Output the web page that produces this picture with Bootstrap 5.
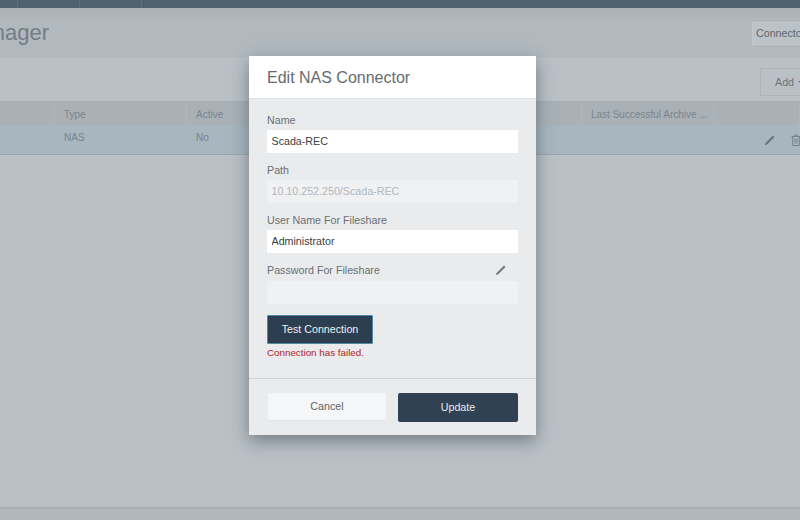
<!doctype html>
<html lang="en"><head><meta charset="utf-8"><title>Connector Manager</title>
<link href="https://cdn.jsdelivr.net/npm/bootstrap@5.3.0/dist/css/bootstrap.min.css" rel="stylesheet">
<style>
html,body{height:100%}
body{width:800px;height:520px;overflow:hidden;position:relative;font-family:"Liberation Sans",Arial,sans-serif;font-size:12px;background:#b9c0c6;color:#69737b}
.top-strip{height:8px;background:#51616f}
.top-strip span{width:62px;border-right:1px solid #5f6e7b;flex:none}
.top-strip span:first-child{width:18px}
.head-zone{height:50px;background:linear-gradient(#a9b1b7,#b1b9bf 30%);border-bottom:1px solid #b4bcc2}
.page-title{width:49px;font-size:22px;line-height:26px;color:#747c84;white-space:nowrap;overflow:hidden;direction:rtl;margin-top:12px}
.conn-select{margin-top:14px;width:48px;height:23px;background:#bcc3c8;border:1px solid #c3c9ce;border-right:0;font-size:10.7px;line-height:21px;padding-left:3px;color:#5d666e;white-space:nowrap;overflow:hidden}
.tool-zone{height:43px;background:#b9c0c6}
.add-btn{margin-top:10px;width:40px;height:28px;background:#b9c0c6;border:1px solid #adb5bb;border-right:0;font-size:10.7px;line-height:26px;padding-left:14px;color:#6b747c;white-space:nowrap;overflow:hidden}
.add-caret{display:inline-block;border:3px solid transparent;border-top-color:#6b747c;border-bottom:0;margin-left:4px;vertical-align:2px}
.grid-wrap{display:grid;grid-template-columns:55px 132px 395px 132px 86px}
.grid-wrap>div{padding-left:9px;font-size:10px;white-space:nowrap;overflow:hidden}
.grid-head{height:24px;background:#a9b1b7;border-top:1px solid #a5adb3}
.grid-head>div{line-height:25px;color:#7b848b;border-right:1px solid #aeb6bc}
.grid-body{height:30px;background:#a7b6bf;border-bottom:1px solid #9aa5ad}
.grid-body>div{line-height:26px;color:#75838c}
.grid-wrap>.row-icons{padding:9px 0 0 50px;gap:15px}
.fill-zone{height:352px}
.foot-zone{height:14px;background:#b0b8be;border-top:2px solid #a6aeb4}
.dlg{position:absolute;left:249px;top:56px;width:287px;height:379px;background:#e9ebed;box-shadow:0 6px 16px rgba(50,60,70,.5)}
.dlg-head{height:43px;background:#fff;border-bottom:1px solid #dfe2e4;padding:13px 18px 0;font-size:16px;line-height:18px;color:#666b70}
.dlg-body{height:280px;padding:14px 18px 0;border-bottom:1px solid #d2d5d8}
.fld-label{height:17px;line-height:14px;font-size:10.7px;color:#6a6f74}
.fld-label.pw-label{height:18px}
.fld-input{display:block;width:251px;height:23px;border:0;border-radius:0;background:#fff;padding:0 4.5px 2px;font-size:10.7px;color:#3c4043;margin-bottom:10px}
.fld-input:disabled{background:#f0f1f3;color:#b3b6b9}
.fld-input:focus{outline:0;box-shadow:none;background:#fff}
.test-btn{width:106px;height:29px;margin-top:1px;background:#2d3e50;border:1px solid #4c8aa8;border-radius:1px;color:#eef1f3;font-size:10.7px;padding:0}
.fail-msg{font-size:9.8px;line-height:12px;margin-top:3px;color:#b5222c}
.dlg-foot{padding:14px 18px 0;gap:12px}
.cancel-btn,.update-btn{height:28px;border-radius:2px;font-size:10.7px;padding:0}
.cancel-btn{width:118px;margin-left:1px;background:#f4f6f7;border:0;border-bottom:1px solid #e1e3e5;color:#5f6468}
.update-btn{width:120px;height:29px;background:#2f4153;border:0;color:#e8ecef}
.pen-sm{display:block;flex:none}
.pen-label{margin:1px 11px 0 0;flex:none}
</style></head>
<body>
<div class="top-strip d-flex"><span></span><span></span><span></span></div>
<div class="head-zone d-flex justify-content-between">
  <div class="page-title">Connector Manager</div>
  <div class="conn-select">Connectors</div>
</div>
<div class="tool-zone d-flex justify-content-end"><div class="add-btn">Add<span class="add-caret"></span></div></div>
<div class="grid-wrap grid-head"><div></div><div>Type</div><div>Active</div><div>Last Successful Archive ...</div><div></div></div>
<div class="grid-wrap grid-body"><div></div><div>NAS</div><div>No</div><div></div>
  <div class="row-icons d-flex">
    <svg class="pen-sm" width="12" height="12" viewBox="0 0 12 12"><path d="M1 11l.5-2L9 1.500l1.500 1.500L3 10.500z" fill="#66737c"/></svg>
    <svg class="pen-sm" width="10" height="12" viewBox="0 0 10 12" fill="none" stroke="#76838c"><path d="M.5 2.500h9M3.500 2.500V1h3v1.500M1.700 2.500v9h6.600v-9M4 4.500v5M6 4.500v5"/></svg>
  </div>
</div>
<div class="fill-zone"></div>
<div class="foot-zone"></div>

<div class="dlg">
  <div class="dlg-head">Edit NAS Connector</div>
  <div class="dlg-body">
    <div class="fld-label">Name</div>
    <input class="form-control fld-input" value="Scada-REC">
    <div class="fld-label">Path</div>
    <input class="form-control fld-input" value="10.10.252.250/Scada-REC" disabled>
    <div class="fld-label">User Name For Fileshare</div>
    <input class="form-control fld-input" value="Administrator">
    <div class="fld-label pw-label d-flex justify-content-between">Password For Fileshare
      <svg class="pen-label" width="12" height="12" viewBox="0 0 12 12"><path d="M1 11l.5-2L9 1.500l1.500 1.500L3 10.500z" fill="#75797d"/></svg>
    </div>
    <input class="form-control fld-input" disabled>
    <button type="button" class="btn test-btn">Test Connection</button>
    <div class="fail-msg">Connection has failed.</div>
  </div>
  <div class="dlg-foot d-flex align-items-start">
    <button type="button" class="btn cancel-btn">Cancel</button>
    <button type="button" class="btn update-btn">Update</button>
  </div>
</div>
</body></html>
